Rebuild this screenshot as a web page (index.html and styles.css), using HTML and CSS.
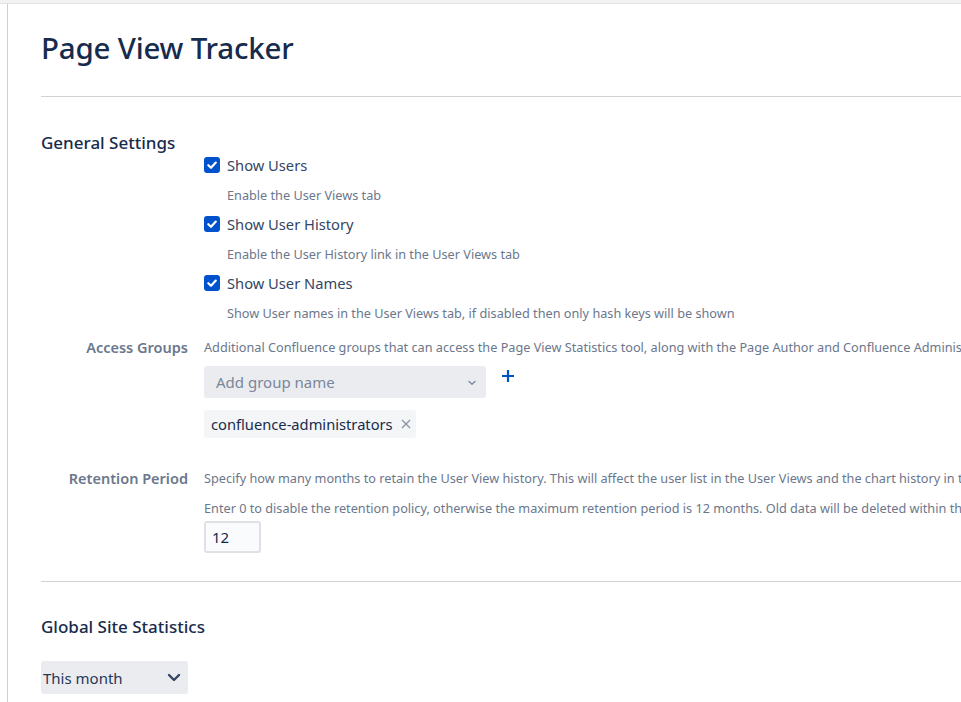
FILE: index.html
```html
<!DOCTYPE html>
<html lang="en">
<head>
<meta charset="utf-8">
<title>Page View Tracker</title>
<link rel="stylesheet" href="styles.css">
</head>
<body>
<div class="topbar"></div>
<div class="frame">
  <main class="content">
    <h1 class="title">Page View Tracker</h1>
    <hr class="rule">
    <section class="settings">
      <h2 class="section-title">General Settings</h2>
      <div class="form-row checks-row">
        <div class="label"></div>
        <div class="field">
          <div class="check">
            <span class="box"><svg width="16" height="16" viewBox="0 0 16 16"><rect x="0" y="0" width="16" height="16" rx="3" fill="#0052CC"/><path d="M4.3 8.2 L7 10.8 L11.8 5.6" fill="none" stroke="#fff" stroke-width="2.2" stroke-linecap="round" stroke-linejoin="round"/></svg></span>
            <span class="check-label">Show Users</span>
          </div>
          <div class="desc check-desc">Enable the User Views tab</div>
          <div class="check">
            <span class="box"><svg width="16" height="16" viewBox="0 0 16 16"><rect x="0" y="0" width="16" height="16" rx="3" fill="#0052CC"/><path d="M4.3 8.2 L7 10.8 L11.8 5.6" fill="none" stroke="#fff" stroke-width="2.2" stroke-linecap="round" stroke-linejoin="round"/></svg></span>
            <span class="check-label">Show User History</span>
          </div>
          <div class="desc check-desc">Enable the User History link in the User Views tab</div>
          <div class="check">
            <span class="box"><svg width="16" height="16" viewBox="0 0 16 16"><rect x="0" y="0" width="16" height="16" rx="3" fill="#0052CC"/><path d="M4.3 8.2 L7 10.8 L11.8 5.6" fill="none" stroke="#fff" stroke-width="2.2" stroke-linecap="round" stroke-linejoin="round"/></svg></span>
            <span class="check-label">Show User Names</span>
          </div>
          <div class="desc check-desc">Show User names in the User Views tab, if disabled then only hash keys will be shown</div>
        </div>
      </div>
      <div class="form-row access-row">
        <div class="label">Access Groups</div>
        <div class="field">
          <div class="desc">Additional Confluence groups that can access the Page View Statistics tool, along with the Page Author and Confluence Administrators</div>
          <div class="group-add">
            <div class="select">
              <span class="placeholder">Add group name</span>
              <svg class="small-chev" width="10" height="6" viewBox="0 0 10 6"><path d="M2 1.5 L5 4.2 L8 1.5" fill="none" stroke="#8993A4" stroke-width="1.6" stroke-linecap="round" stroke-linejoin="round"/></svg>
            </div>
            <svg class="plus" width="14" height="14" viewBox="0 0 14 14"><path d="M7 1 V13 M1 7 H13" stroke="#0052CC" stroke-width="2.2"/></svg>
          </div>
          <div class="tag">
            <span class="tag-text">confluence-administrators</span>
            <svg class="tag-x" width="10" height="10" viewBox="0 0 10 10"><path d="M1 1 L9 9 M9 1 L1 9" stroke="#8993A4" stroke-width="1.3"/></svg>
          </div>
        </div>
      </div>
      <div class="form-row retention-row">
        <div class="label">Retention Period</div>
        <div class="field">
          <div class="desc">Specify how many months to retain the User View history. This will affect the user list in the User Views and the chart history in the Page View Statistics tool.</div>
          <div class="desc desc-second">Enter 0 to disable the retention policy, otherwise the maximum retention period is 12 months. Old data will be deleted within the next day.</div>
          <div class="num-input">12</div>
        </div>
      </div>
    </section>
    <hr class="rule rule-bottom">
    <section class="global">
      <h2 class="section-title">Global Site Statistics</h2>
      <div class="period-select">
        <span>This month</span>
        <svg width="14" height="9" viewBox="0 0 14 9"><path d="M2 2 L7 7 L12 2" fill="none" stroke="#344563" stroke-width="2.4" stroke-linecap="round" stroke-linejoin="round"/></svg>
      </div>
    </section>
  </main>
</div>
</body>
</html>
```
FILE: styles.css
```css
html, body {
  margin: 0;
  padding: 0;
  background: #fff;
  overflow: hidden;
}
body {
  font-family: "Noto Sans", "Open Sans", sans-serif;
  color: #172B4D;
  width: 961px;
  height: 702px;
}
.topbar {
  height: 3px;
  background: #f2f2f2;
  border-bottom: 1px solid #e4e4e4;
}
.frame {
  margin-left: 7px;
  border-left: 1px solid #cfcfcf;
  height: 698px;
  overflow: hidden;
}
.content {
  padding-left: 33px;
  white-space: nowrap;
}
.title {
  margin: 0;
  padding-top: 24px;
  font-size: 29.5px;
  font-weight: 500;
  line-height: 40px;
  color: #172B4D;
  letter-spacing: -0.2px;
}
.rule {
  margin: 28px 0 0 0;
  border: 0;
  border-top: 1px solid #d2d2d2;
  height: 0;
}
.settings {
  padding-top: 34px;
}
.section-title {
  margin: 0;
  font-size: 17px;
  font-weight: 500;
  line-height: 24px;
  color: #172B4D;
}
.form-row {
  display: grid;
  grid-template-columns: 147px auto;
  column-gap: 16px;
}
.label {
  text-align: right;
  font-size: 14.5px;
  font-weight: 600;
  color: #6B778C;
  line-height: 20px;
}
.desc {
  font-size: 12.7px;
  color: #6B778C;
  line-height: 20px;
}
.check {
  display: flex;
  align-items: center;
  height: 20px;
}
.box {
  display: flex;
  width: 16px;
  height: 16px;
  margin-right: 7px;
}
.check-label {
  font-size: 14.7px;
  color: #344563;
  line-height: 20px;
}
.check-desc {
  margin-top: 10px;
  margin-bottom: 9px;
  padding-left: 23px;
}
.checks-row {
  margin-top: 0;
}
.access-row {
  margin-top: 5px;
}
.group-add {
  display: flex;
  align-items: flex-start;
  margin-top: 9px;
}
.select {
  width: 282px;
  height: 32px;
  box-sizing: border-box;
  background: #EBECF0;
  border-radius: 3px;
  display: flex;
  align-items: center;
  justify-content: space-between;
  padding: 0 9px 0 12px;
}
.placeholder {
  font-size: 15px;
  color: #7A869A;
}
.small-chev {
  margin-top: 2px;
}
.plus {
  margin-left: 15px;
  margin-top: 3px;
}
.tag {
  display: inline-flex;
  align-items: center;
  margin-top: 12px;
  height: 28px;
  background: #F4F5F7;
  border-radius: 3px;
  padding: 0 5px 0 7px;
}
.tag-text {
  font-size: 14.7px;
  color: #172B4D;
}
.tag-x {
  margin-left: 8px;
}
.retention-row {
  margin-top: 30px;
}
.desc-second {
  margin-top: 10px;
}
.num-input {
  width: 57px;
  height: 32px;
  box-sizing: border-box;
  border: 2px solid #DFE1E6;
  border-radius: 3px;
  background: #FAFBFC;
  font-size: 15px;
  color: #172B4D;
  line-height: 28px;
  padding-left: 6px;
  margin-top: 3px;
}
.rule-bottom {
  margin-top: 28px;
}
.global {
  padding-top: 33px;
}
.period-select {
  margin-top: 22px;
  width: 147px;
  height: 33px;
  box-sizing: border-box;
  background: #EBECF0;
  border-radius: 3px;
  display: flex;
  align-items: center;
  justify-content: space-between;
  padding: 0 7px 0 2px;
  font-size: 15px;
  color: #253858;
}
```
